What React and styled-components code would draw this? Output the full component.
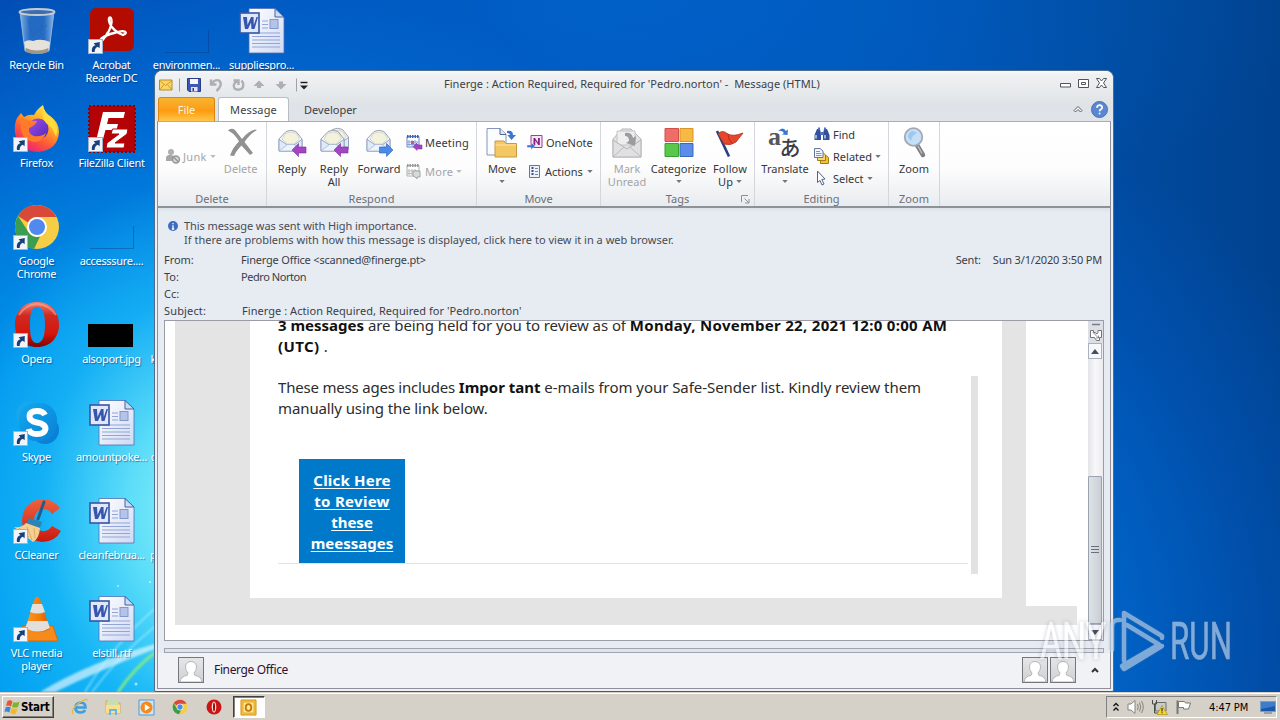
import React from "react";
import styled, { createGlobalStyle, css } from "styled-components";

const GlobalStyle = createGlobalStyle`
  * { box-sizing: border-box; }
  body { margin: 0; overflow: hidden; font-family: "Noto Sans", "Open Sans", sans-serif; font-size: 11px; color: #2b2f38; }
  svg { display: block; flex: none; overflow: visible; }
`;

/* ---------- desktop ---------- */
const Screen = styled.div`
  position: relative; width: 1280px; height: 720px; overflow: hidden;
  display: grid; grid-template-rows: 692px 28px;
`;
const Desktop = styled.div`
  position: relative; overflow: hidden;
  background:
    radial-gradient(ellipse 250px 330px at 205px 510px, rgba(150,245,248,.98), rgba(110,232,250,.85) 30%, rgba(40,195,250,.5) 65%, rgba(0,160,245,0) 100%),
    radial-gradient(ellipse 620px 680px at 180px 620px, #00adf5 0%, #0097ee 45%, rgba(0,115,220,.75) 74%, rgba(0,70,175,0) 100%),
    radial-gradient(ellipse 700px 260px at 620px 0, rgba(0,110,215,.45), rgba(0,90,190,0) 100%),
    radial-gradient(ellipse 780px 620px at 640px 640px, #0478e0 0%, #006bd2 50%, rgba(0,88,190,.5) 80%, rgba(0,66,150,0) 100%),
    linear-gradient(90deg, #0046ac 0%, #0055bd 45%, #0054b6 70%, #004a9e 88%, #00428f 100%);
`;
const Rays = styled.svg`position: absolute; left: 0; bottom: 0;`;
const IconGrid = styled.div`
  display: grid; grid-template-columns: repeat(4, 75px); grid-auto-rows: 98px;
  margin-left: -1px; position: relative;
`;
const Shortcut = styled.div`
  grid-column: ${(p) => p.$col}; grid-row: ${(p) => p.$row};
  display: flex; flex-direction: column; align-items: center; padding-top: 7px;
`;
const Picture = styled.div`position: relative; width: 48px; height: 48px;`;
const LinkBadge = styled.div`
  position: absolute; left: 0; bottom: 1px; width: 15px; height: 15px;
  background: #f1f5fa; border: 1px solid #9fb4cc;
`;
const Name = styled.div`
  margin-top: 3px; color: #fff; line-height: 13px; text-align: center; white-space: pre;
  letter-spacing: ${(p) => p.$ls ?? -0.3}px; text-shadow: 1px 1px 1px rgba(0,30,90,.5);
`;

/* ---------- window ---------- */
const Window = styled.div`
  position: absolute; left: 154px; top: 70px; width: 960px; height: 622px;
  border: 1px solid #4c6c90; border-radius: 8px 8px 2px 2px; background: #eceff3;
  padding: 1px 2px 2px; display: flex; flex-direction: column; overflow: hidden;
  border-bottom-color: #55585e;
`;
const Chrome = styled.div`
  height: 50px; flex: none; display: flex; flex-direction: column; margin: -1px -2px 0; padding: 1px 2px 0;
  background: linear-gradient(#fbfbfc 0, #f0f1f3 3px, #e8ebed 18px, #dfe3e7 34px, #e0e4e8 50px);
`;
const TitleBar = styled.div`height: 25px; display: grid; grid-template-columns: 260px 1fr 53px; align-items: center;`;
const QuickBar = styled.div`display: flex; align-items: center; padding-left: 1px; height: 25px;`;
const Title = styled.div`
  padding-left: 27px; white-space: pre; letter-spacing: ${(p) => p.$ls}px; color: #3b3f47; margin-top: -2px;
`;
const TabBar = styled.div`height: 24px; display: flex; align-items: flex-end; line-height: 23px;`;
const FileTab = styled.div`
  width: 57px; height: 24px; border-radius: 3px 3px 0 0; color: #fff6d8; text-align: center; margin-left: 1px;
  background: linear-gradient(#f8b530, #fba01c 45%, #ff9a10 55%, #ffc74b); border: 1px solid #d9860f; border-bottom: 0;
`;
const Tab = styled.div`
  width: ${(p) => p.$w}px; height: 24px; text-align: center; color: #3c3f45; margin-left: ${(p) => p.$ml || 0}px;
  letter-spacing: ${(p) => p.$ls || 0}px; line-height: ${(p) => (p.$active ? 24 : 26)}px;
  ${(p) => p.$active && css`background: #fff; border: 1px solid #b9bdc3; border-bottom: 0; border-radius: 3px 3px 0 0; position: relative; z-index: 1;`}
`;
const TabTools = styled.div`margin-left: auto; display: flex; align-items: center; height: 24px; gap: 8px; padding-right: 3px;`;
const Ribbon = styled.div`
  height: 87px; flex: none; display: flex; border: 1px solid #8b9097; border-bottom: 2px solid #8d9299; border-top-color: #a9adb3;
  background: linear-gradient(#fff 0, #fdfdfd 45px, #eff1f3 72px, #e9ecef 84px);
`;
const Group = styled.div`
  width: ${(p) => p.$w}px; height: 84px; display: flex; flex-direction: column;
  border-right: 1px solid #d3d6da;
`;
const GroupBody = styled.div`height: 69px; display: flex; padding-left: ${(p) => p.$pl ?? 4}px;`;
const GroupName = styled.div`
  height: 15px; line-height: 15px; text-align: center; color: #6a7079; letter-spacing: ${(p) => p.$ls ?? 0}px;
  display: flex; justify-content: center; align-items: center; position: relative;
`;
const Launcher = styled.svg`position: absolute; right: 4px; top: 4px;`;
const BigButton = styled.div`
  width: ${(p) => p.$w}px; padding-top: 4px; display: flex; flex-direction: column; align-items: center; flex: none;
  color: ${(p) => (p.$off ? "#a3a5a9" : "#34373c")}; white-space: nowrap; line-height: 13px; letter-spacing: ${(p) => p.$ls ?? 0}px;
  svg.big { margin-bottom: 4px; }
`;
const Line = styled.div`height: 13px; display: flex; align-items: center; gap: 3px;`;
const SmallColumn = styled.div`
  display: flex; flex-direction: column; gap: ${(p) => p.$gap}px; padding-top: ${(p) => p.$pt}px; padding-left: ${(p) => p.$pl || 0}px; flex: none;
`;
const SmallButton = styled.div`
  height: 18px; display: flex; align-items: center; white-space: nowrap; gap: ${(p) => p.$gap ?? 4}px;
  color: ${(p) => (p.$off ? "#a3a5a9" : "#34373c")}; letter-spacing: ${(p) => p.$ls ?? 0}px;
`;
const Caret = styled.i`
  display: block; flex: none; border: 3px solid transparent; border-top: 3px solid ${(p) => (p.$off ? "#b8babd" : "#73767b")}; border-bottom: 0; transform: scaleX(.9);
  margin-left: ${(p) => p.$ml || 0}px;
`;

const Inspector = styled.div`
  flex: 1; min-height: 0; display: flex; flex-direction: column; background: linear-gradient(#dde1e8, #e7ebf2 5px);
  border: 1px solid #8f8e99; border-top: 0; padding: 11px 6px 0;
`;
const InfoBar = styled.div`height: 28px; display: flex; gap: 6px; line-height: 14px; padding-left: 4px; white-space: pre; margin-bottom: 4px;`;
const InfoLine = styled.div`letter-spacing: ${(p) => p.$ls}px; color: #474b55;`;
const Field = styled.div`height: 17px; line-height: 17px; display: flex; white-space: pre; color: #3a3e48;`;
const FieldName = styled.div`width: 77px; letter-spacing: ${(p) => p.$ls ?? -0.05}px;`;
const FieldValue = styled.div`letter-spacing: ${(p) => p.$ls ?? 0}px; padding-left: ${(p) => p.$pl || 0}px;`;
const Sent = styled.div`margin-left: auto; display: flex; gap: 12px; letter-spacing: -0.17px; padding-right: 2px;`;
const Reader = styled.div`
  height: 321px; flex: none; width: 940px; margin-top: 1px; border: 1px solid #9a9da8; background: #fff; display: flex; overflow: hidden;
`;
const Page = styled.div`width: 923px; flex: none; padding-left: 10px; height: 319px;`;
const Sheet = styled.div`width: 902px; height: 304px; background: #e4e4e4; padding-left: 75px; display: flex; gap: 24px;`;
const Card = styled.div`width: 752px; height: 277px; background: #fff; padding-left: 28px; display: flex; gap: 3px; flex: none;`;
const SideSheet = styled.div`width: 51px; height: 285px; background: #fff;`;
const Letter = styled.div`
  width: 690px; height: 243px; border-bottom: 1px solid #e3e3e3; font-size: 15px; line-height: 21px; color: #2c2c2c;
  white-space: pre; display: flex; flex-direction: column; overflow: hidden;
  b { color: #111; }
`;
const TextRow = styled.div`height: 21px; flex: none; letter-spacing: ${(p) => p.$ls ?? 0}px; margin-top: ${(p) => p.$mt || 0}px;`;
const Run = styled.span`letter-spacing: ${(p) => p.$ls}px;`;
const Quote = styled.div`width: 7px; height: 198px; margin-top: 55px; background: #e2e2e2;`;
const ReviewLink = styled.div`
  width: 106px; height: 104px; flex: none; margin: 40px 0 0 21px; padding-top: 11px; background: #0079cb; color: #fff; font-weight: 700;
  text-align: center; text-decoration: underline; text-underline-offset: 2px;
`;
const ScrollBar = styled.div`width: 15px; display: flex; flex-direction: column; background: linear-gradient(90deg, #e4e5e9, #f8f8fa 50%, #ececf0);`;
const SplitHandle = styled.div`height: 22px; background: #dcdfe8; padding: 2px 1px 0;`;
const ScrollButton = styled.div`
  height: 16px; width: 14px; border: 1px solid #aab0bd; background: #f7f8fb; display: flex; align-items: center; justify-content: center;
`;
const Thumb = styled.div`
  height: 148px; margin-top: 117px; border: 1px solid #9aa2ae; border-radius: 1px; background: linear-gradient(90deg, #dfe3e8, #c9cfd6);
  display: flex; flex-direction: column; align-items: center; justify-content: center; gap: 2px; width: 14px; padding-bottom: 2px;
`;
const Grip = styled.i`width: 8px; height: 1px; background: #68707d;`;
const Splitter = styled.div`height: 5px; flex: none; margin-top: 7px; width: 940px; border: 1px solid #a0a4b0; background: #dfe3ea;`;
const People = styled.div`
  flex: 1; margin: 0 -6px; background: #f0f2f6; padding: 0 11px 2px 20px; display: flex; align-items: center; color: #32102e;
`;
const Avatar = styled.div`
  width: 26px; height: 26px; flex: none; border: 1px solid #77777b; background: linear-gradient(#e6e6e8, #cfd0d2); margin-right: ${(p) => p.$mr || 0}px; overflow: hidden;
`;
const PersonName = styled.div`flex: 1; font-size: 12px; letter-spacing: ${(p) => p.$ls}px; white-space: pre;`;

/* ---------- taskbar ---------- */
const Taskbar = styled.div`
  background: #d5d0c8; border-top: 1px solid #d5d0c8; box-shadow: inset 0 1px 0 #fff; position: relative;
  display: flex; align-items: center; padding: 1px 3px 0 2px;
`;
const StartButton = styled.div`
  width: 52px; height: 22px; border: 1px solid; border-color: #fff #404040 #404040 #fff; box-shadow: inset -1px -1px 0 #868279;
  display: flex; align-items: center; padding-left: 1px; gap: 0; color: #000; font: bold 11.500px "DejaVu Sans Condensed", "DejaVu Sans", sans-serif; letter-spacing: -0.2px;
`;
const Launch = styled.div`width: 33.5px; display: flex; justify-content: center;`;
const QuickLaunch = styled.div`display: flex; margin-left: 9px; align-items: center;`;
const ActiveTask = styled.div`
  width: 32px; height: 22px; margin-left: 2px; background: #fff; border: 1px solid; border-color: #404040 #fff #fff #404040; box-shadow: inset 1px 1px 0 #868279;
  display: flex; align-items: center; justify-content: center;
`;
const Tray = styled.div`
  margin-left: auto; width: 171px; height: 22px; border: 1px solid; border-color: #808080 #fff #fff #808080;
  display: flex; align-items: center; gap: 7px; padding-left: 6px; color: #000; font-family: "DejaVu Sans Condensed", "Noto Sans", sans-serif;
`;
const Clock = styled.div`margin-left: 10px; width: 40px; margin-right: 4px; white-space: nowrap; letter-spacing: ${(p) => p.$ls}px;`;
const Watermark = styled.svg`position: absolute; left: 1030px; top: 600px; pointer-events: none;`;
const MarkLetters = styled.g`font-family: Roboto, sans-serif; font-size: 51px; filter: drop-shadow(0 0 2px rgba(60,72,92,.6));`;

/* ---------- desktop drawings ---------- */
const Badge = () => (
  <LinkBadge><svg width="13" height="13" viewBox="0 0 13 13"><path d="M3 12C2.400 8 4 5.500 6.500 5.200L4.600 3.200 10.800 2 10.600 8.200 8.800 6.800C6.600 7.600 5.600 9.500 5.700 12Z" fill="#173f7c" /></svg></LinkBadge>
);

const WordDoc = () => (
  <svg width="48" height="48" viewBox="0 0 48 48">
    <defs><linearGradient id="wd" x2="1" y2="1"><stop stopColor="#fff" /><stop offset="1" stopColor="#cfd9f3" /></linearGradient></defs>
    <path d="M11 1.500H37L46 10V46H11Z" fill="url(#wd)" stroke="#526fb5" strokeWidth=".8" />
    <path d="M37 1.500V10H46Z" fill="#cddcf6" stroke="#46609f" />
    <path d="M24 14H30M24 17.500H30M24 21H30M14 26H42M14 29.500H42M14 33H42M14 36.500H42M14 40H42" stroke="#93a5d6" />
    <rect x="32" y="12.500" width="8" height="9" fill="#b4c4e8" stroke="#8198cd" />
    <rect x="2" y="6" width="19" height="20" fill="#dfe7f8" stroke="#3656a8" strokeWidth="1.600" />
    <path d="M5 10H9L9.500 18 13 10H15.500L15.800 18 18.500 10H20L16.500 22H13.500L13 15.500 10 22H7Z" fill="#3555ae" />
  </svg>
);
const Bin = () => (
  <svg width="48" height="48" viewBox="0 0 48 48">
    <defs><linearGradient id="bin"><stop stopColor="#a5caf0" stopOpacity=".8" /><stop offset=".3" stopColor="#3b79c8" stopOpacity=".6" /><stop offset=".7" stopColor="#3b79c8" stopOpacity=".6" /><stop offset="1" stopColor="#a7cdf0" stopOpacity=".85" /></linearGradient></defs>
    <path d="M7 5 12 44Q24 49 36 44L41 5Z" fill="url(#bin)" stroke="#8fb4da" />
    <path d="M11 35Q15 32 20 34 28 31 37 35L36 43Q24 47.500 12.500 43Z" fill="#e6e2da" />
    <path d="M13 41Q24 46 35.500 41L35 45Q24 49 13 45Z" fill="#a09789" />
    <path d="M15 12 20 30M20 28 34 18M30 12 27 26" stroke="#2a63b4" strokeWidth="1.500" opacity=".5" fill="none" />
    <ellipse cx="24" cy="5" rx="17.500" ry="3" fill="#3d6fae" stroke="#c4ccd4" strokeWidth="1.800" />
  </svg>
);
const Acrobat = () => (
  <svg width="48" height="48" viewBox="0 0 48 48">
    <rect x="2" y="1" width="44" height="43" rx="6" fill="#b30b00" />
    <path d="M14 33C20 29 26 15 22.500 10.500 19 9 20 22 35 28 41 26 37 22 28 25.500 20 27 12 31 12.500 33.500 13.500 35.500 18 29 20 25" fill="none" stroke="#fff" strokeWidth="2.300" strokeLinejoin="round" />
  </svg>
);
const Firefox = () => (
  <svg width="48" height="48" viewBox="0 0 48 48">
    <defs>
      <linearGradient id="ff" x1=".8" y1="0" x2=".2" y2="1"><stop stopColor="#fff44f" /><stop offset=".35" stopColor="#ffae25" /><stop offset=".65" stopColor="#ff5a36" /><stop offset="1" stopColor="#e31587" /></linearGradient>
      <linearGradient id="ffp" x2="1" y2="1"><stop stopColor="#a64cf0" /><stop offset="1" stopColor="#4b2bb3" /></linearGradient>
    </defs>
    <path d="M4 13 8 8 11 12Q16 9 21 10 24 4 30 0 31 7 37 11 46 17 46 27 45 45 25 47 5 46 2 28 1 19 4 13Z" fill="url(#ff)" />
    <circle cx="25" cy="24" r="10.500" fill="url(#ffp)" />
    <path d="M8 13Q14 16 24 16 23 20 16 23 15 29 21 31 28 32 33 28 30 37 21 37 9 35 8 23Z" fill="#ff7a2a" />
    <path d="M30 1Q31 8 38 12 47 21 43 32 40 22 33 18 28 12 30 1Z" fill="#ffdb3c" />
  </svg>
);
const FileZilla = () => (
  <svg width="48" height="48" viewBox="0 0 48 48">
    <rect x="1" y="1" width="46" height="46" fill="#b40306" stroke="#8c0002" strokeWidth="2" strokeDasharray="2 2" />
    <path d="M15 7H37L35.500 13H20.500L19 19H30L28.500 25H17.500L14.500 36H8Z" fill="#fff" />
    <path d="M24.500 24H40L39 29 27 38H37L36 43H18L19 38 31 29H23Z" fill="#fff" stroke="#b40306" strokeWidth="1" />
  </svg>
);
const ChromeLogo = ({ size = 48 }) => (
  <svg width={size} height={size} viewBox="0 0 48 48">
    <circle cx="24" cy="24" r="22" fill="#f7cd45" />
    <path d="M24 2A22 22 0 0 1 43.500 14H24A10 10 0 0 0 15 19.500L5 13A22 22 0 0 1 24 2Z" fill="#d9493a" />
    <path d="M5 13 15.500 29A10 10 0 0 0 27 33.500L21 46A22 22 0 0 1 5 13Z" fill="#3a9d50" />
    <circle cx="24" cy="24" r="10" fill="#fff" /><circle cx="24" cy="24" r="8" fill="#5189ee" />
  </svg>
);
const OperaLogo = () => (
  <svg width="48" height="48" viewBox="0 0 48 48">
    <defs><linearGradient id="op" x2="0" y2="1"><stop stopColor="#f2806f" /><stop offset=".3" stopColor="#cf2a20" /><stop offset=".7" stopColor="#d6160c" /><stop offset="1" stopColor="#7d0504" /></linearGradient></defs>
    <path fillRule="evenodd" d="M24 1C38 1 46 11 46 23.500S38 46 24 46 2 36 2 23.500 10 1 24 1ZM24 6C18 6 17 13 17 23.500S18 42 24 42 32 34 32 23.500 30 6 24 6Z" fill="url(#op)" />
    <path d="M6 14Q12 4 24 3 37 4 43 14" fill="none" stroke="#ffb5a6" strokeWidth="2" opacity=".5" />
  </svg>
);
const Skype = () => (
  <svg width="48" height="48" viewBox="0 0 48 48">
    <defs><linearGradient id="sk" x2="1" y2="1"><stop stopColor="#12a8ee" /><stop offset="1" stopColor="#0a80d6" /></linearGradient></defs>
    <circle cx="16" cy="15" r="13" fill="#16a7ec" /><circle cx="32" cy="31" r="14" fill="#0a80d6" /><rect x="6" y="4" width="38" height="38" rx="17" fill="url(#sk)" />
    <path d="M32 16Q30 12 24 12 16.500 12 16.500 17.500 16.500 22 24 23.500 32.500 25 32.500 30 31.500 35 24 35 17 35 15.500 30" fill="none" stroke="#fff" strokeWidth="6" />
  </svg>
);
const CCleaner = () => (
  <svg width="48" height="48" viewBox="0 0 48 48">
    <defs><linearGradient id="cc" x2="0" y2="1"><stop stopColor="#f0623f" /><stop offset="1" stopColor="#c9180f" /></linearGradient></defs>
    <path d="M47 11Q40 2 29 2 10 4 9 24 11 43 29 45 42 45 48 34L39 29Q35 35 29 34 21 32 21 23 22 13 30 12 36 12 39 17Z" fill="url(#cc)" />
    <path d="M31 5 25 22" stroke="#1d5f8a" strokeWidth="3" strokeLinecap="round" />
    <path d="M16 21 29 25 27 31 13 27Z" fill="#2d83b4" />
    <path d="M13 26 27 31Q26 42 20 45L1 30Q9 31 13 26Z" fill="#f3cf92" /><path d="M6 31 16 40M14 30 19 43M21 31 22 41" stroke="#d99a4e" strokeWidth=".7" />
  </svg>
);
const Vlc = () => (
  <svg width="48" height="48" viewBox="0 0 48 48">
    <defs><linearGradient id="vlc"><stop stopColor="#ff9a28" /><stop offset=".6" stopColor="#f37a08" /><stop offset="1" stopColor="#cf5c00" /></linearGradient></defs>
    <path d="M10 31H40L45 46H4Z" fill="#f58b1c" stroke="#d26a05" />
    <path d="M22 3Q24 .5 26.500 3L37 34Q25 41 12 34Z" fill="url(#vlc)" />
    <path d="M19.500 9H29L32 17Q25 20 17 17ZM15 26H34.500L37 33Q25 40 12 33Z" fill="#e2dfdc" />
  </svg>
);
const EmptyThumb = () => (<svg width="48" height="48" viewBox="0 0 48 48"><path d="M2 45.500H45.500V23" fill="none" stroke="#0a2f70" opacity=".35" /></svg>);
const BlackThumb = () => (<svg width="48" height="48" viewBox="0 0 48 48"><path d="M0 23H45V46H0Z" fill="#000" /></svg>);
const NoArt = () => null;

/* ---------- ribbon drawings ---------- */
const Big = ({ children }) => <svg className="big" width="32" height="32" viewBox="0 0 32 32">{children}</svg>;
const envelope = (
  <g>
    <path d="M3 13 10 5.500Q15 3 20 5.500L26 13V25H3Z" fill="#f4f6f8" stroke="#8f99ab" strokeWidth=".9" />
    <path d="M6 13 9.500 7.500Q15 4.500 20.500 7.500L23.500 13 18 18H11.500Z" fill="#f3f2dd" stroke="#c3c4b2" strokeWidth=".6" />
    <path d="M3 13.500 11.500 19H18L26 13.500V25H3Z" fill="#dfe9f8" stroke="#8fa0c2" strokeWidth=".9" />
    <path d="M3 25 11.500 18.500H18L26 25Z" fill="#edf3fc" stroke="#a4b3cf" strokeWidth=".7" />
  </g>
);
const purpleArrow = <path d="M16 24 22.500 17.500V21H30V27H22.500V30.500Z" fill="#a446c4" stroke="#7a2a9a" strokeWidth=".6" />;
const ReplyIcon = () => <Big>{envelope}{purpleArrow}</Big>;
const ReplyAllIcon = () => <Big><g transform="translate(4.500 -2)">{envelope}</g>{envelope}{purpleArrow}</Big>;
const ForwardIcon = () => <Big><g transform="translate(1 0)">{envelope}</g><path d="M30 24 23.500 17.500V21H16.500V27H23.500V30.500Z" fill="#4a8bea" stroke="#2b5fb8" strokeWidth=".6" /></Big>;
const DeleteIcon = () => <Big><path d="M3 4.500Q6 1.500 10 4L17 13Q23 5 30 3.500L32 4Q25 8 19.500 16L28 27 25 29 16.500 19.500Q11 25 9 30L5 29.500Q8 21 14 15.500 10 8 3 4.500Z" fill="#909193" /></Big>;
const MoveIcon = () => (
  <Big>
    <path d="M1 2.500H14L20 8V29H1Z" fill="#fbfcff" stroke="#8594b8" /><path d="M14 2.500V8.500H20" fill="#dde5f5" stroke="#55678f" />
    <path d="M9 15H18L20 17.500H30.500V31H9Z" fill="#f4c765" stroke="#c79a3c" /><path d="M9.500 19H30" stroke="#fde4a4" />
    <path d="M21 5Q27 4 27 9H30L25.500 14 21.500 9H24Q24 7 21 7Z" fill="#3b76d2" />
  </Big>
);
const UnreadIcon = () => (
  <Big><path d="M2 13 11 3H20L30 13V31H2Z" fill="#e3e1e3" stroke="#b7b5b7" /><path d="M6 5H24V19H6Z" fill="#efeeef" stroke="#c6c4c6" /><path d="M2 14 16 23 30 14V31H2Z" fill="#e0dfe1" stroke="#b5b3b6" /><path d="M2 31 13 21M30 31 19 21" stroke="#bbb" />
    <path d="M14 7Q21 6 22 12L25 10 24 20 15 17 18 15Q18 10 14 10Z" fill="#9c9b9d" /></Big>
);
const CategorizeIcon = () => (
  <Big><path d="M2 2.500H15.500V15.500H2Z" fill="#ee6d68" stroke="#d2504c" /><path d="M17 2.500H30V15.500H17Z" fill="#f7b944" stroke="#d5952a" /><path d="M2 17.500H15.500V30.500H2Z" fill="#58c74a" stroke="#37a32d" /><path d="M17 17.500H30V30.500H17Z" fill="#5b8ce8" stroke="#3a67c2" /></Big>
);
const FlagIcon = () => <Big><path d="M3 5 15 30.500" stroke="#28407f" strokeWidth="2.600" /><path d="M4 8Q8 3 14 8 19 11 29 7L22 16Q17 20 10 18Z" fill="#e4472c" stroke="#b52a18" strokeWidth=".8" /><path d="M14 8Q14 13 18 17.500" stroke="#b82c1a" fill="none" /></Big>;
const Kana = styled.text`font-family: "Noto Sans CJK JP", sans-serif; font-weight: 500;`;
const Latin = styled.text`font-family: "Liberation Serif", serif; font-weight: 700;`;
const TranslateIcon = () => (
  <Big><Latin x="-1" y="19" fontSize="26" fill="#55575b">a</Latin><Kana x="10.500" y="28.500" fontSize="21" fill="#3d3e42">あ</Kana>
    <path d="M9 5Q14 0 17 5L19 3.500 18.500 9 13 8.500 15 7Q13 4 9 5Z" fill="#3b76d2" /></Big>
);
const ZoomIcon = () => (
  <Big><path d="M19 19 25 29" stroke="#7d7f84" strokeWidth="4.500" strokeLinecap="round" /><path d="M20 20 24 27.500" stroke="#b9bbc0" strokeWidth="1.500" /><circle cx="15.500" cy="11" r="8.800" fill="#c5dff8" stroke="#a3a8b2" strokeWidth="1.800" /><path d="M10 11Q10 6 15 5L19 7Q14 9 13 15Z" fill="#94c0f0" opacity=".8" /></Big>
);
const Small = ({ children }) => <svg width="16" height="16" viewBox="0 0 16 16">{children}</svg>;
const CalIcon = ({ off }) => (
  <Small><path d="M1 2.500H13V13H1Z" fill="#fff" stroke={off ? "#adafb2" : "#6b83c4"} /><path d="M1 2.500H13" stroke={off ? "#999" : "#3e5fb4"} strokeWidth="3" strokeDasharray="1.500 1" /><path d="M3 6V12M6 6V12M9 6V12M1 8H13M1 10.500H13" stroke={off ? "#b8b9bb" : "#86a0da"} />
    {off ? <path d="M7 8H14V14H11V16L8 13H7Z" fill="#d8d9da" stroke="#a3a4a6" /> : <g><path d="M5 7H8V10H5Z" fill="#e0564c" /><path d="M7 12.500 11 9V11H16V15H11V16.500Z" fill="#a446c4" stroke="#7a2a9a" strokeWidth=".5" /></g>}</Small>
);
const OneNoteIcon = () => <Small><path d="M4 1.500H15V13.500H4Z" fill="#f4e6f4" stroke="#9b3f97" /><path d="M6.500 11V4H8L11 8.500V4H12.800V11H11.300L8.300 6.500V11Z" fill="#86217f" /><path d="M0 11H4V8.500L8.500 12 4 15.500V13.500H0Z" fill="#3f74d4" stroke="#fff" strokeWidth=".4" /></Small>;
const ActionsIcon = () => <Small><path d="M2.500 2.500H12.500V14.500H2.500Z" fill="#edf1fa" stroke="#6a7690" /><path d="M4.500 5H6.500M4.500 8H6.500M4.500 11H6.500" stroke="#3a4f80" strokeWidth="2" /><path d="M8 5.500H11M8 8.500H11M8 11.500H11" stroke="#7487ad" /></Small>;
const JunkIcon = () => <Small><circle cx="6" cy="4" r="3" fill="#aeb0b2" /><path d="M1 13V9Q3 6 6 7L10 8V13Z" fill="#a5a7a9" /><circle cx="11" cy="11.500" r="3.500" fill="#d4d5d6" stroke="#949698" strokeWidth="1.400" /><path d="M8.500 9 13.500 14" stroke="#949698" strokeWidth="1.400" /></Small>;
const FindIcon = () => <Small><path d="M3 3H6L7 8V14H.5V9ZM13 3H10L9 8V14H15.500V9Z" fill="#33509b" /><path d="M6 6H10V9H6ZM4 1.500H6V4H4ZM10 1.500H12V4H10Z" fill="#4d70c0" /><path d="M2 9V12.500M11 9V12.500" stroke="#b3cbf4" strokeWidth="1.600" /></Small>;
const RelatedIcon = () => <Small><path d="M6.500 7.500H12L14.500 9.500V15.500H6.500Z" fill="#f2c238" stroke="#a57c13" /><path d="M3.500 4.500H9L11.500 7V12.500H3.500Z" fill="#f7d872" stroke="#a57c13" /><path d="M.5.5H6L9 3V9.500H.5Z" fill="#f4f7ff" stroke="#6375a0" /><path d="M2 3.500H6M2 5.500H7.500M2 7.500H7.500" stroke="#7c95cd" /></Small>;
const SelectIcon = () => <Small><path d="M3.500 1 11 9 7.800 9.500 10 14 8 15 6 10.500 3.500 12.500Z" fill="#fff" stroke="#53628c" /></Small>;

const PersonGlyph = () => <svg width="24" height="24" viewBox="0 0 24 24"><path d="M1 24Q2 18 8 17.500L9 15Q6 12 6.500 8 7.500 3.500 12 3.500T17.500 8Q18 12 15 15L16 17.500Q22 18 23 24Z" fill="#fff" stroke="#b4b5b8" /></svg>;

function QuickAccess() {
  return (
    <QuickBar>
      <svg width="141" height="18" viewBox="0 0 141 18">
        <path d="M1.500 4H14V14H1.500Z" fill="#fbd664" stroke="#b98b25" /><path d="M1.500 4.500 7.500 9.500 14 4.500M1.500 14 6 8.500M14 14 9.500 8.500" fill="none" stroke="#c48f28" strokeWidth=".8" />
        <path d="M21.500 2.500V15.500" stroke="#9a9ca0" />
        <path d="M29.500 2.500H42.500V15.500H31L29.500 14Z" fill="#3f57b4" stroke="#2b3c86" /><path d="M32 3H40V8H32Z" fill="#f4f6fd" /><path d="M33 11H39.500V15.500H33Z" fill="#e2e6f4" /><path d="M34.500 12H36V15H34.500Z" fill="#2b3c86" />
        <path d="M53 3.500V8.500H58.500M53.500 8Q57 3 61 4.500 65.500 8.500 58.500 15" fill="none" stroke="#adafb2" strokeWidth="2.400" />
        <path d="M75.500 4.500H80.500V9M79.500 5Q74 8 76.500 12.500 80 15 84 12.500 87 8.500 83.500 4.500" fill="none" stroke="#adafb2" strokeWidth="2.400" />
        <path d="M95.500 10 101 4.500 106.500 10H103V12H99V10ZM117.500 8 123 13.500 128.500 8H125V5.500H121V8Z" fill="#adafb2" />
        <path d="M138.500 2.500V15.500" stroke="#a0a2a6" />
      </svg>
      <svg width="14" height="18" viewBox="0 0 14 18"><path d="M1.500 6.500H8.500" stroke="#222" strokeWidth="1.300" /><path d="M1 9.500H9L5 13.500Z" fill="#222" /></svg>
    </QuickBar>
  );
}

function RibbonBar() {
  return (
    <Ribbon>
      <Group $w={109}>
        <GroupBody $pl={7}>
          <SmallColumn $pt={25} $gap={0}><SmallButton $off $gap={2} $ls={0.3}><JunkIcon />Junk <Caret $off $ml={1} /></SmallButton></SmallColumn>
          <SmallColumn $pl={2} $pt={0} $gap={0}><BigButton $w={46} $off $ls={0.05}><DeleteIcon />Delete</BigButton></SmallColumn>
        </GroupBody>
        <GroupName>Delete</GroupName>
      </Group>
      <Group $w={210}>
        <GroupBody $pl={4}>
          <BigButton $w={42}><ReplyIcon />Reply</BigButton>
          <BigButton $w={42}><ReplyAllIcon />Reply<Line>All</Line></BigButton>
          <BigButton $w={48}><ForwardIcon />Forward</BigButton>
          <SmallColumn $pl={3} $pt={11} $gap={11}>
            <SmallButton $gap={3} $ls={0.15}><CalIcon />Meeting</SmallButton>
            <SmallButton $off $gap={3} $ls={0.3}><CalIcon off />More <Caret $off /></SmallButton>
          </SmallColumn>
        </GroupBody>
        <GroupName $ls={0.1}>Respond</GroupName>
      </Group>
      <Group $w={124}>
        <GroupBody $pl={4}>
          <BigButton $w={42}><MoveIcon />Move<Line><Caret /></Line></BigButton>
          <SmallColumn $pl={4} $pt={11} $gap={11}>
            <SmallButton $gap={3}><OneNoteIcon />OneNote</SmallButton>
            <SmallButton $gap={2}><ActionsIcon />Actions <Caret $ml={2} /></SmallButton>
          </SmallColumn>
        </GroupBody>
        <GroupName>Move</GroupName>
      </Group>
      <Group $w={154}>
        <GroupBody $pl={4}>
          <BigButton $w={44} $off><UnreadIcon />Mark<Line>Unread</Line></BigButton>
          <BigButton $w={59}><CategorizeIcon />Categorize<Line><Caret /></Line></BigButton>
          <BigButton $w={44} $ls={0.15}><FlagIcon />Follow<Line>Up <Caret /></Line></BigButton>
        </GroupBody>
        <GroupName>Tags<Launcher width="9" height="9" viewBox="0 0 9 9"><path d="M.5 7V.5H7M3.500 3.500 7.500 7.500M8 4V8H4" fill="none" stroke="#8c9096" /></Launcher></GroupName>
      </Group>
      <Group $w={134}>
        <GroupBody $pl={4}>
          <BigButton $w={52}><TranslateIcon />Translate<Line><Caret /></Line></BigButton>
          <SmallColumn $pl={3} $pt={3} $gap={4}>
            <SmallButton $gap={3}><FindIcon />Find</SmallButton>
            <SmallButton $gap={3}><RelatedIcon />Related <Caret /></SmallButton>
            <SmallButton $gap={3}><SelectIcon />Select <Caret /></SmallButton>
          </SmallColumn>
        </GroupBody>
        <GroupName>Editing</GroupName>
      </Group>
      <Group $w={51}>
        <GroupBody $pl={4}><BigButton $w={42}><ZoomIcon />Zoom</BigButton></GroupBody>
        <GroupName>Zoom</GroupName>
      </Group>
    </Ribbon>
  );
}

function MailWindow() {
  return (
    <Window>
      <Chrome>
        <TitleBar>
          <QuickAccess />
          <Title $ls={0.02}>{"Finerge : Action Required, Required for 'Pedro.norton' -  Message (HTML)"}</Title>
          <svg width="50" height="16" viewBox="0 0 50 16"><g fill="#fff" stroke="#50545b"><path d="M2.500 6.500H12.500V10H2.500Z" /><path d="M20.500 2.500H30.500V10.500H20.500ZM23.500 5.500H27.500V7.500H23.500Z" /><path d="M38.500 1.500H41.500L43.500 4 45.500 1.500H48.500L45.500 6 48.500 10.500H45.500L43.500 8 41.500 10.500H38.500L41.500 6Z" /></g></svg>
        </TitleBar>
        <TabBar>
          <FileTab>File</FileTab>
          <Tab $active $w={71} $ml={3} $ls={0.15}>Message</Tab>
          <Tab $w={83} $ls={0}>Developer</Tab>
          <TabTools>
            <svg width="10" height="8" viewBox="0 0 10 8"><path d="M1 5.500 5 1.500 9 5.500 7.500 7 5 4.500 2.500 7Z" fill="#fff" stroke="#555a62" /></svg>
            <svg width="17" height="17" viewBox="0 0 17 17"><circle cx="8.500" cy="8.500" r="8" fill="#5a88d0" stroke="#4672ba" /><path d="M6 6.800Q6 4.200 8.600 4.200T11.200 6.500Q11.200 7.600 9.700 8.500 8.600 9.200 8.600 10.300M8.600 11.700V13.300" fill="none" stroke="#fff" strokeWidth="1.700" /></svg>
          </TabTools>
        </TabBar>
      </Chrome>
      <RibbonBar />
      <Inspector>
        <InfoBar>
          <svg width="10" height="14" viewBox="0 0 10 14"><circle cx="5" cy="7" r="5" fill="#3f6cc0" /><path d="M5 4V5.200M5 6.300V10M3.800 10H6.200" stroke="#fff" strokeWidth="1.300" /></svg>
          <div>
            <InfoLine $ls={-0.08}>This message was sent with High importance.</InfoLine>
            <InfoLine $ls={0.01}>If there are problems with how this message is displayed, click here to view it in a web browser.</InfoLine>
          </div>
        </InfoBar>
        <Field><FieldName>From:</FieldName><FieldValue $ls={-0.19}>{"Finerge Office <scanned@finerge.pt>"}</FieldValue><Sent><span>Sent:</span><span>Sun 3/1/2020 3:50 PM</span></Sent></Field>
        <Field><FieldName>To:</FieldName><FieldValue $ls={-0.45}>Pedro Norton</FieldValue></Field>
        <Field><FieldName>Cc:</FieldName></Field>
        <Field><FieldName $ls={0.15}>Subject:</FieldName><FieldValue $pl={1} $ls={0.05}>Finerge : Action Required, Required for 'Pedro.norton'</FieldValue></Field>
        <Reader>
          <Page>
            <Sheet>
              <Card>
                <Letter>
                  <TextRow $mt={-6}><b>3 messages</b><Run $ls={-0.08}> are being held for you to review as of </Run><b><Run $ls={0.3}>Monday, November 22, 2021 12:0 0:00 AM</Run></b></TextRow>
                  <TextRow $ls={0.4}><b>(UTC)</b> .</TextRow>
                  <TextRow $mt={20}><Run $ls={-0.2}>These mess ages includes </Run><b>Impor tant</b><Run $ls={-0.05}> e-mails from your Safe-Sender list. Kindly review them</Run></TextRow>
                  <TextRow $ls={-0.11}>manually using the link below.</TextRow>
                  <ReviewLink><Run $ls={0.2}>Click Here</Run>{"\n"}<Run $ls={0.3}>to Review</Run>{"\nthese\nmeessages"}</ReviewLink>
                </Letter>
                <Quote />
              </Card>
              <SideSheet />
            </Sheet>
          </Page>
          <ScrollBar>
            <SplitHandle><svg width="13" height="18" viewBox="0 0 13 18"><path d="M3 1.500H11" stroke="#777b86" strokeWidth="1.500" /><path d="M1.500 7.500H4.500V9.500H6L8 11 9 9.500V7.500H12.500V14.500H10.500V17.500H7.500L5.500 14.500H1.500Z" fill="#fff" stroke="#666" strokeWidth=".9" /><path d="M4 9.500 9.500 15V12.500M9.500 15H7" fill="none" stroke="#777" strokeWidth=".8" /></svg></SplitHandle>
            <ScrollButton><svg width="8" height="5" viewBox="0 0 8 5"><path d="M0 5 4 0 8 5Z" fill="#474d5e" /></svg></ScrollButton>
            <Thumb><Grip /><Grip /><Grip /></Thumb>
            <ScrollButton><svg width="8" height="5" viewBox="0 0 8 5"><path d="M0 0 4 5 8 0Z" fill="#474d5e" /></svg></ScrollButton>
          </ScrollBar>
        </Reader>
        <Splitter />
        <People>
          <Avatar $mr={10}><PersonGlyph /></Avatar>
          <PersonName $ls={-0.35}>Finerge Office</PersonName>
          <Avatar $mr={2}><PersonGlyph /></Avatar><Avatar $mr={15}><PersonGlyph /></Avatar>
          <svg width="8" height="6" viewBox="0 0 8 6"><path d="M1 5 4 2 7 5" fill="none" stroke="#30343c" strokeWidth="2" /></svg>
        </People>
      </Inspector>
    </Window>
  );
}

const shortcuts = [
  [1, 1, Bin, "Recycle Bin", false], [2, 1, Acrobat, "Acrobat\nReader DC", true], [3, 1, EmptyThumb, "environmen...", false], [4, 1, WordDoc, "suppliespro...", false],
  [1, 2, Firefox, "Firefox", true], [2, 2, FileZilla, "FileZilla Client", true],
  [1, 3, ChromeLogo, "Google\nChrome", true], [2, 3, EmptyThumb, "accesssure....", false],
  [1, 4, OperaLogo, "Opera", true], [2, 4, BlackThumb, "alsoport.jpg", false], [3, 4, NoArt, "k                          ", false],
  [1, 5, Skype, "Skype", true], [2, 5, WordDoc, "amountpoke...", false], [3, 5, NoArt, "c                          ", false],
  [1, 6, CCleaner, "CCleaner", true], [2, 6, WordDoc, "cleanfebrua...", false], [3, 6, NoArt, "p                          ", false],
  [1, 7, Vlc, "VLC media\nplayer", true], [2, 7, WordDoc, "elstill.rtf", false],
];

const WinFlag = () => <svg width="17" height="16" viewBox="0 0 16 16"><path d="M3 2Q6 .5 8 2.500L6.500 7.500Q4 6 1.500 7Z" fill="#e8562a" /><path d="M9 3Q12 4.500 15 2.500L13.500 8Q10.500 9 7.500 8Z" fill="#76b82a" /><path d="M1.200 8.200Q4 7 6.200 8.600L4.800 13.500Q2 12 0 13Z" fill="#3d83e0" /><path d="M7.200 9.200Q10 10.500 13 9.200L11.500 14.500Q8.500 16 5.700 14Z" fill="#f7b91c" /></svg>;

function TaskbarPanel() {
  return (
    <Taskbar>
      <StartButton><WinFlag />Start</StartButton>
      <QuickLaunch>
        <Launch><svg width="18" height="18" viewBox="0 0 18 18"><path d="M4 9.500H14.500Q14.500 4.500 9.500 4.500 4.500 5 4.300 10 5 14.500 9.500 14.500 13 14.500 14 12" fill="none" stroke="#3aa0e6" strokeWidth="2.600" /><path d="M2 16Q-1 12 8 5 16-.5 17 2.500" fill="none" stroke="#e7b93c" strokeWidth="1.300" /></svg></Launch>
        <Launch><svg width="18" height="18" viewBox="0 0 18 18"><path d="M2 3H8L9 5H16V15H2Z" fill="#f3d77c" stroke="#cfa444" strokeWidth=".8" /><path d="M4 2H14V7H4Z" fill="#c4dfb4" /><path d="M2 7H16V15H2Z" fill="#f9e08a" /><path d="M5 17V11H13V17H11V13H7V17Z" fill="#6fb3e2" /></svg></Launch>
        <Launch><svg width="17" height="17" viewBox="0 0 17 17"><path d="M1 1H16V16H1Z" fill="#cfe5f6" stroke="#4f9bd3" /><circle cx="8.500" cy="8.500" r="6" fill="#f58a1f" /><path d="M6.800 5 12 8.500 6.800 12Z" fill="#fff" /></svg></Launch>
        <Launch><ChromeLogo size={16} /></Launch>
        <Launch><svg width="16" height="16" viewBox="0 0 16 16"><circle cx="8" cy="8" r="7.500" fill="#cc1414" /><ellipse cx="8" cy="8" rx="2.300" ry="5.500" fill="#f8e0de" /><ellipse cx="8" cy="8" rx="1" ry="4.500" fill="#a00808" /></svg></Launch>
      </QuickLaunch>
      <ActiveTask><svg width="17" height="17" viewBox="0 0 17 17"><path d="M1 1H16V16H1Z" fill="#f9c840" stroke="#d48d17" /><path d="M3 3H14V14H3Z" fill="#fde79a" stroke="#e5a92a" /><ellipse cx="8.500" cy="8.500" rx="2.800" ry="3.400" fill="none" stroke="#bf7a0b" strokeWidth="1.800" /></svg></ActiveTask>
      <Tray>
        <svg width="7" height="10" viewBox="0 0 7 10"><path d="M.5 4 3 1.500 5.500 4M.5 8.500 3 6 5.500 8.500" fill="none" stroke="#111" strokeWidth="1.300" /></svg>
        <svg width="17" height="16" viewBox="0 0 17 16"><path d="M1 5H4L8 1.500V14.500L4 11H1Z" fill="#fff" stroke="#84857f" /><path d="M10.500 5Q12 8 10.500 11M12.500 3.500Q15 8 12.500 12.500M14.500 2Q18 8 14.500 14" fill="none" stroke="#85867f" /></svg>
        <svg width="17" height="16" viewBox="0 0 17 16"><path d="M4.500 3.500H15V12H4.500Z" fill="#c9cbca" stroke="#6c6e6a" /><path d="M1.500 1V5H5.500V1M3.500 5V14H8" fill="none" stroke="#4a4c48" /><path d="M11 6.500 16.500 15.500H6Z" fill="#f6d52c" stroke="#b49410" strokeWidth=".7" /><path d="M11 9V12.500M11 13.300V14.300" stroke="#333" strokeWidth="1.200" /></svg>
        <svg width="17" height="16" viewBox="0 0 17 16"><path d="M2.500 1.500V15" stroke="#777870" strokeWidth="2" /><path d="M3.500 2.500H9.500L10.500 4H15.500L13.500 10H8.500V8.500H3.500Z" fill="#fff" stroke="#777870" /></svg>
        <Clock $ls={-0.1}>4:47 PM</Clock>
        <svg width="16" height="14" viewBox="0 0 16 14"><path d="M.5 1.500H15.500V11.500H.5Z" fill="#1d57a8" stroke="#7e9cc4" /><path d="M1 2H15V6L1 9Z" fill="#3f7ccc" /><path d="M4 13H12" stroke="#56708f" /></svg>
      </Tray>
    </Taskbar>
  );
}

const markStrokes = "M82 50V27Q82 19 90 20M94 61V13L132 36M97 25 129 44.500 92 66M132 38V36M132 46 94 69 92 66";

export default function App() {
  return (
    <>
      <GlobalStyle />
      <Screen>
        <Desktop>
          <Rays width="200" height="160" viewBox="0 0 200 160">
            <defs><filter id="soft"><feGaussianBlur stdDeviation="1" /></filter></defs>
            <g filter="url(#soft)">
              <path d="M40 160Q90 130 155 112V117Q100 138 55 160Z" fill="#fff" opacity=".6" />
              <path d="M85 160Q115 110 158 74M92 160Q120 122 158 92" fill="none" stroke="#d8fbff" strokeWidth="1.500" opacity=".55" />
              <path d="M118 160Q136 134 156 120" fill="none" stroke="#8bef7a" strokeWidth="3" opacity=".85" />
            </g>
            <g fill="#fff" opacity=".6"><circle cx="118" cy="54" r="1" /><circle cx="136" cy="152" r="1.500" /><circle cx="150" cy="50" r="1" /></g>
          </Rays>
          <IconGrid>
            {shortcuts.map(([col, row, Art, name, linked]) => (
              <Shortcut key={`${col}-${row}`} $col={col} $row={row}>
                <Picture><Art />{linked && <Badge />}</Picture>
                <Name>{name}</Name>
              </Shortcut>
            ))}
          </IconGrid>
          <MailWindow />
        </Desktop>
        <TaskbarPanel />
        <Watermark width="210" height="80" viewBox="0 0 210 80">
          <path d={markStrokes} fill="none" stroke="#6f7a8c" strokeWidth="7" strokeLinejoin="round" opacity=".13" />
          <MarkLetters fill="#fff" opacity=".5" stroke="#fff" strokeWidth=".6">
            <text x="10" y="59" textLength="66" lengthAdjust="spacingAndGlyphs">ANY</text>
            <text x="140" y="59" textLength="62" lengthAdjust="spacingAndGlyphs">RUN</text>
          </MarkLetters>
          <path d={markStrokes} fill="none" stroke="#c4d6ee" strokeWidth="4.500" strokeLinejoin="round" strokeLinecap="round" opacity=".62" />
        </Watermark>
      </Screen>
    </>
  );
}
